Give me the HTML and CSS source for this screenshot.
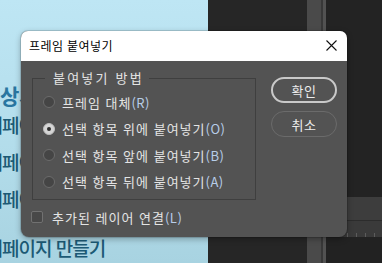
FILE: index.html
```html
<!DOCTYPE html>
<html lang="ko">
<head>
    <meta charset="UTF-8">
    <meta name="viewport" content="width=device-width, initial-scale=1.0">
    <title>프레임 붙여넣기</title>
    <link rel="stylesheet" href="styles.css">
</head>
<body>
    <div class="scene">
        <!-- 뒤쪽 작업 화면 -->
        <div class="canvas">
            <div class="heading">상세페이지 만들기</div>
            <div class="line">상세페이지 만들기</div>
            <div class="line">상세페이지 만들기</div>
            <div class="line">상세페이지 만들기</div>
            <div class="line last">상세페이지 만들기</div>
        </div>
        <div class="pasteboard"></div>
        <div class="strip"></div>
        <div class="panel">
            <div class="panel-top"></div>
            <div class="panel-band"></div>
            <div class="panel-ruler"></div>
            <div class="panel-rest"></div>
        </div>

        <!-- 대화상자 -->
        <div class="dialog">
            <div class="titlebar">
                <span class="title">프레임 붙여넣기</span>
                <svg class="close" width="11" height="11" viewBox="0 0 11 11">
                    <path d="M0.5 0.5 L10.5 10.5 M10.5 0.5 L0.5 10.5" stroke="#111" stroke-width="1.1" fill="none"/>
                </svg>
            </div>
            <div class="body">
                <div class="left">
                    <fieldset class="group">
                        <legend>붙여넣기 방법</legend>
                        <div class="option"><span class="radio"></span>프레임 대체<span class="key">(R)</span></div>
                        <div class="option"><span class="radio checked"></span>선택 항목 위에 붙여넣기<span class="key">(O)</span></div>
                        <div class="option"><span class="radio"></span>선택 항목 앞에 붙여넣기<span class="key">(B)</span></div>
                        <div class="option"><span class="radio"></span>선택 항목 뒤에 붙여넣기<span class="key">(A)</span></div>
                    </fieldset>
                    <div class="check-row"><span class="checkbox"></span>추가된 레이어 연결<span class="key">(L)</span></div>
                </div>
                <div class="buttons">
                    <button class="btn primary">확인</button>
                    <button class="btn">취소</button>
                </div>
            </div>
        </div>
    </div>
</body>
</html>
```

FILE: styles.css
```css
html, body {
    margin: 0;
    padding: 0;
}
body {
    width: 382px;
    height: 263px;
    overflow: hidden;
    font-family: "Noto Sans CJK KR", "Noto Sans", sans-serif;
}
.scene {
    position: relative;
    width: 382px;
    height: 263px;
    display: grid;
    grid-template-columns: 208px 99px 14px 2px 3px 1fr;
    background: #242424;
}
.canvas {
    background: linear-gradient(180deg, #bee6f4 0%, #b2dcea 60%, #a8d3e1 100%);
    overflow: hidden;
    padding-top: 84px;
    color: #1c5a75;
    white-space: nowrap;
}
.heading {
    font-size: 21px;
    font-weight: 700;
    line-height: 22px;
    color: #2a76a0;
    margin-bottom: 8px;
}
.line {
    font-size: 19px;
    font-weight: 500;
    line-height: 22px;
    letter-spacing: -1px;
    margin-left: -31px;
    margin-bottom: 15px;
}
.line.last {
    margin-top: 27px;
}
.pasteboard {
    background: #262626;
}
.strip {
    background: #4a4a4a;
    grid-column: 3;
    box-shadow: 2px 0 0 #383838, 5px 0 0 #525252;
}
.panel {
    grid-column: 6;
    display: flex;
    flex-direction: column;
}
.panel-top {
    height: 197px;
    background: #232323;
}
.panel-band {
    height: 23px;
    background: #3d3d3d;
    border-bottom: 1px solid #2c2c2c;
}
.panel-ruler {
    height: 16px;
    background: #3a3a3a;
    background-image: repeating-linear-gradient(90deg, #5c5c5c 0 1px, transparent 1px 9px);
    background-size: 100% 4px;
    background-position: 3px bottom;
    background-repeat: no-repeat;
}
.panel-rest {
    flex: 1;
    background: #222;
}

/* 대화상자 */
.dialog {
    position: absolute;
    left: 21px;
    top: 31px;
    width: 326px;
    height: 206px;
    border-radius: 7px 7px 8px 8px;
    overflow: hidden;
    background: #535353;
    box-shadow: 0 0 0 1px rgba(0,0,0,0.12), 0 2px 6px rgba(0,0,0,0.3);
}
.titlebar {
    height: 30px;
    background: #fff;
    display: flex;
    align-items: center;
    justify-content: space-between;
    padding: 0 10px 0 8px;
}
.title {
    font-size: 12px;
    color: #000;
    letter-spacing: 0.4px;
    margin-top: -2px;
}
.close {
    display: block;
    margin-top: -2px;
}
.body {
    display: flex;
    padding: 9px 0 0 11px;
    color: #e4e4e4;
    font-size: 13px;
    letter-spacing: 1px;
}
.group {
    width: 224px;
    height: 130px;
    box-sizing: border-box;
    margin: 0;
    padding: 3px 0 0 10px;
    border: 1px solid #3f3f3f;
    border-radius: 0;
}
.group legend {
    margin-left: 2px;
    padding: 0 5px 0 8px;
    line-height: 16px;
    letter-spacing: 2.2px;
}
.option {
    height: 26.5px;
    display: flex;
    align-items: center;
}
.key {
    color: #b7cde8;
    letter-spacing: 0.5px;
}
.radio {
    width: 12px;
    height: 12px;
    box-sizing: border-box;
    border-radius: 50%;
    border: 1px solid #6b6b6b;
    background: #454545;
    margin-right: 7px;
    position: relative;
}
.radio.checked {
    background: #d5d5d5;
    border-color: #bcbcbc;
}
.radio.checked::after {
    content: "";
    position: absolute;
    left: 3px;
    top: 3px;
    width: 4px;
    height: 4px;
    border-radius: 50%;
    background: #2e2e2e;
}
.check-row {
    display: flex;
    align-items: center;
    height: 20px;
    margin-top: 7px;
    margin-left: -1px;
}
.checkbox {
    width: 12px;
    height: 12px;
    box-sizing: border-box;
    border: 1px solid #717171;
    border-radius: 2px;
    background: #484848;
    margin-right: 9px;
}
.buttons {
    display: flex;
    flex-direction: column;
    gap: 8px;
    margin: 7px 0 0 15px;
}
.btn {
    width: 66px;
    height: 26px;
    border-radius: 13px;
    border: 1.5px solid #6b6b6b;
    background: transparent;
    color: #ececec;
    font-family: inherit;
    font-size: 13px;
    letter-spacing: 0.5px;
    padding: 0;
}
.btn.primary {
    border: 2px solid #c9c9c9;
}
```
